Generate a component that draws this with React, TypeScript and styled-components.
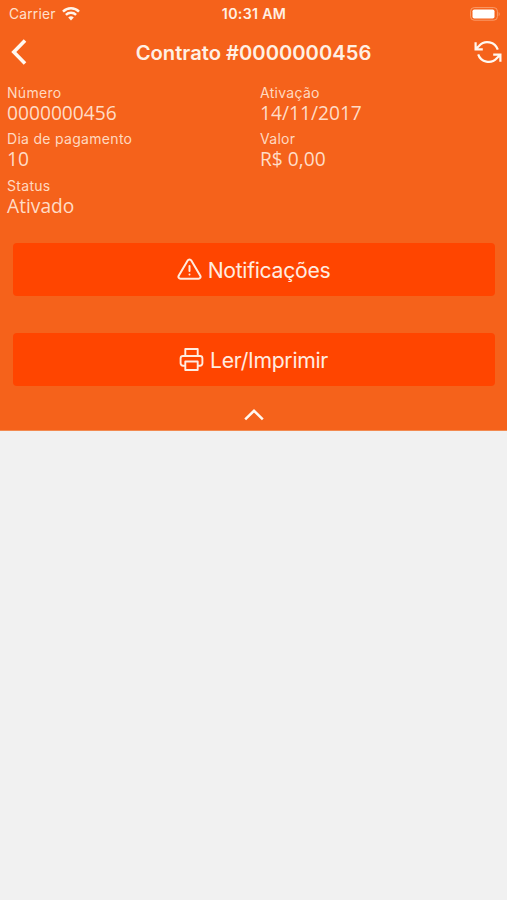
import React from "react";
import styled, { createGlobalStyle } from "styled-components";

const GlobalStyle = createGlobalStyle`
  * { box-sizing: border-box; }
  body { margin: 0; background: #f1f1f1; font-family: Inter, "Liberation Sans", sans-serif; }
`;

const Screen = styled.main`
  min-height: 900px;
  background: #f1f1f1;
`;

const Panel = styled.section`
  height: 431px;
  display: flex;
  flex-direction: column;
  background: #f5621b;
  color: #fff0e4;
  border-bottom: 1px solid #f28a50;
`;

const StatusBar = styled.div`
  height: 27px;
  padding: 0 6px 0 9px;
  display: grid;
  grid-template-columns: 1fr auto 1fr;
  align-items: center;
`;

const Carrier = styled.div`
  display: flex;
  align-items: center;
  gap: 6px;
  font-size: 13.8px;
  letter-spacing: 0.2px;
  color: #ffe0cc;
`;

const Clock = styled.time`
  margin-right: 2px;
  font-size: 14.2px;
  font-weight: 600;
  letter-spacing: 0.3px;
`;

const Battery = styled.svg`
  justify-self: end;
`;

const NavBar = styled.header`
  height: 50px;
  padding: 0 5px 0 10px;
  display: grid;
  grid-template-columns: 23px 1fr 28px;
  align-items: center;
`;

const Title = styled.h1`
  margin: 1px 0 0;
  text-align: center;
  font-size: 20.2px;
  line-height: 26px;
  font-weight: 600;
  white-space: nowrap;
`;

const IconButton = styled.button`
  padding: 0;
  border: 0;
  background: none;
  color: #fff8f0;
  display: flex;
`;

const Details = styled.dl`
  margin: 0;
  padding: 7px 7px 0;
  display: grid;
  grid-template-columns: 253px 1fr;
  grid-auto-rows: 46.3px;
`;

const Label = styled.dt`
  font-size: 14px;
  line-height: 17px;
  color: #ffd9c0;
  letter-spacing: 0.3px;
`;

const Value = styled.dd`
  margin: 0;
  font-family: "Open Sans", "Noto Sans", sans-serif;
  font-size: 19.2px;
  font-weight: 400;
  line-height: 24px;
  color: #ffdcc6;
`;

const Actions = styled.div`
  margin-top: 20px;
  padding: 0 12.5px;
  display: flex;
  flex-direction: column;
  gap: 37px;
`;

const Action = styled.button`
  height: 53px;
  padding: 1px 0 0;
  border: 0;
  border-radius: 4px;
  background: #ff4500;
  color: #ffece0;
  display: flex;
  align-items: center;
  justify-content: center;
  gap: 6px;
  font: 400 21.2px/30px Inter, sans-serif;
  letter-spacing: -0.3px;
`;

const Collapse = styled(IconButton)`
  align-self: center;
  margin-top: 22px;
`;

const fields = [
  ["Número", "0000000456"],
  ["Ativação", "14/11/2017"],
  ["Dia de pagamento", "10"],
  ["Valor", "R$ 0,00"],
  ["Status", "Ativado"],
];

const stroke = {
  fill: "none",
  stroke: "currentColor",
  strokeLinecap: "round" as const,
  strokeLinejoin: "round" as const,
};

export default function App() {
  return (
    <Screen>
      <GlobalStyle />
      <Panel>
        <StatusBar>
          <Carrier>
            Carrier
            <svg width="18" height="14" viewBox="0 0 18 14" fill="none" stroke="#fff4ea" strokeWidth="2.5">
              <path d="M1 4.6a11.5 11.5 0 0 1 16 0M3.9 7.9a7.4 7.4 0 0 1 10.2 0" />
              <path d="M6.2 10.6a4.1 4.1 0 0 1 5.6 0L9 13.5z" fill="#fff4ea" stroke="none" />
            </svg>
          </Carrier>
          <Clock>10:31 AM</Clock>
          <Battery width="31" height="14" viewBox="0 0 31 14">
            <rect x="0.6" y="0.6" width="26.8" height="12.6" rx="3.6" fill="none" stroke="#fa9c6b" />
            <rect x="2.5" y="2.5" width="22" height="9" rx="1.8" fill="#fff" />
            <path d="M28.7 4.7q2 2.3 0 4.6z" fill="#fa9c6b" />
          </Battery>
        </StatusBar>
        <NavBar>
          <IconButton aria-label="Voltar">
            <svg width="18" height="28" viewBox="0 0 18 28" {...stroke} strokeWidth="3.6" strokeLinecap="butt" strokeLinejoin="miter">
              <path d="M15 2.6 3.8 14 15 25.4" />
            </svg>
          </IconButton>
          <Title>Contrato #0000000456</Title>
          <IconButton aria-label="Atualizar">
            <svg width="28" height="24" viewBox="0 0 28 24" {...stroke} strokeWidth="2.2" strokeLinecap="butt" strokeLinejoin="miter">
              <path d="M1.6 2.3v7h7.2M2.2 8.7l3-3A11 11 0 0 1 23.8 9.7M26.4 21.7v-7h-7.2M25.8 15.3l-3 3A11 11 0 0 1 4.2 14.3" />
            </svg>
          </IconButton>
        </NavBar>
        <Details>
          {fields.map(([label, value]) => (
            <div key={label}>
              <Label>{label}</Label>
              <Value>{value}</Value>
            </div>
          ))}
        </Details>
        <Actions>
          <Action>
            <svg width="25" height="25" viewBox="0 0 25 25" {...stroke} strokeWidth="2">
              <path d="M10.7 3.4 1.7 18.7a2 2 0 0 0 1.8 3h18a2 2 0 0 0 1.8-3l-9-15.3a2.1 2.1 0 0 0-3.6 0zM12.5 9v5M12.5 17.4v.2" />
            </svg>
            Notificações
          </Action>
          <Action>
            <svg width="25" height="25" viewBox="0 0 25 25" {...stroke} strokeWidth="1.9">
              <path d="M6.3 9V2h12.4v7M6.3 18.7H4a2.4 2.4 0 0 1-2.4-2.4v-5A2.4 2.4 0 0 1 4 9h17a2.4 2.4 0 0 1 2.4 2.3v5a2.4 2.4 0 0 1-2.4 2.4h-2.3M6.3 14.5h12.4V23H6.3z" />
            </svg>
            Ler/Imprimir
          </Action>
        </Actions>
        <Collapse aria-label="Recolher">
          <svg width="20" height="13" viewBox="0 0 20 13" {...stroke} strokeWidth="2.5" strokeLinecap="butt" strokeLinejoin="miter">
            <path d="m1.2 11.4 8.8-8.6 8.8 8.6" />
          </svg>
        </Collapse>
      </Panel>
    </Screen>
  );
}
